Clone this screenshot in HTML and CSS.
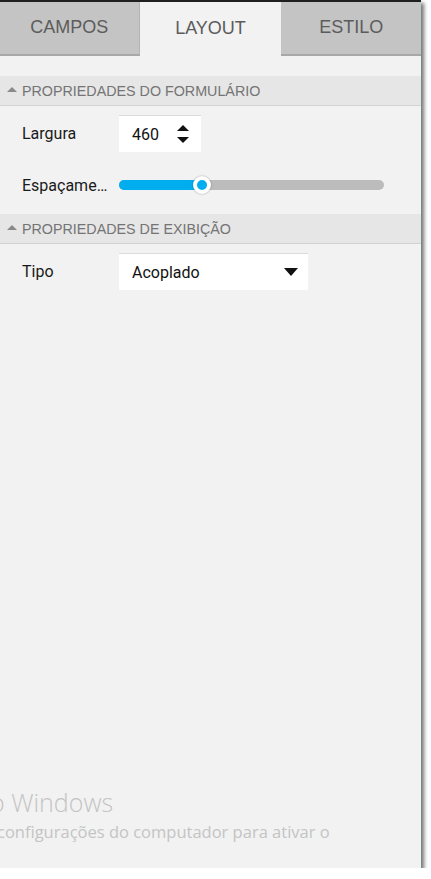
FILE: index.html
```html
<!DOCTYPE html>
<html lang="pt">
<head>
  <meta charset="UTF-8">
  <meta name="viewport" content="width=device-width, initial-scale=1.0">
  <title>Layout</title>
  <link rel="stylesheet" href="styles.css">
</head>
<body>
  <div class="panel">
    <div class="tabs">
      <div class="tab">CAMPOS</div>
      <div class="tab active">LAYOUT</div>
      <div class="tab">ESTILO</div>
    </div>

    <div class="section">
      <div class="section-head"><span class="caret"></span>PROPRIEDADES DO FORMULÁRIO</div>
      <div class="row">
        <label>Largura</label>
        <div class="number">
          <span>460</span>
          <span class="spin">
            <svg width="12" height="22" viewBox="0 0 12 22"><path d="M0 8L6 2L12 8Z" fill="#111"/><path d="M0 14L6 20L12 14Z" fill="#111"/></svg>
          </span>
        </div>
      </div>
      <div class="row slider-row">
        <label>Espaçame…</label>
        <div class="slider">
          <div class="fill"></div>
          <div class="thumb"></div>
        </div>
      </div>
    </div>

    <div class="section">
      <div class="section-head"><span class="caret"></span>PROPRIEDADES DE EXIBIÇÃO</div>
      <div class="row">
        <label>Tipo</label>
        <div class="select">
          <span>Acoplado</span>
          <svg width="14" height="8" viewBox="0 0 14 8"><path d="M0 0L14 0L7 8Z" fill="#111"/></svg>
        </div>
      </div>
    </div>

    <div class="watermark">
      <div class="wm-title">o Windows</div>
      <div class="wm-text">configurações do computador para ativar o</div>
    </div>
  </div>
</body>
</html>
```

FILE: styles.css
```css
body {
  margin: 0;
  padding: 0;
  background: #fff;
}

.panel {
  position: relative;
  width: 421px;
  height: 866px;
  background: #f2f2f2;
  border-top: 2px solid #1f1f1f;
  box-shadow: 3px 3px 4px rgba(0, 0, 0, 0.55);
  overflow: hidden;
  font-family: "Liberation Sans", Arial, sans-serif;
}

.tabs {
  display: flex;
  height: 54px;
}
.tab {
  width: 140px;
  display: flex;
  align-items: center;
  justify-content: center;
  background: #c4c4c4;
  border-bottom: 2px solid #a8a8a8;
  color: #5c5c5c;
  font-size: 18px;
  padding-bottom: 1px;
  box-sizing: border-box;
}
.tab.active {
  width: 142px;
  background: #f2f2f2;
  border-bottom: none;
}
.tab:first-child {
  border-right: 1px solid #b4b4b4;
}

.section {
  margin-top: 20px;
}
.section + .section {
  margin-top: 9px;
}
.section-head {
  display: flex;
  align-items: center;
  height: 29px;
  background: #e6e6e6;
  border-bottom: 1px solid #d2d2d2;
  color: #747474;
  font-size: 14.3px;
  padding-left: 7px;
}
.caret {
  width: 0;
  height: 0;
  border-left: 5px solid transparent;
  border-right: 5px solid transparent;
  border-bottom: 5px solid #8a8a8a;
  margin-right: 5px;
  margin-bottom: 2px;
}

.row {
  display: flex;
  align-items: center;
  padding-left: 22px;
  margin-top: 9px;
}
.row label {
  width: 97px;
  font-family: Roboto, "Liberation Sans", sans-serif;
  font-size: 16px;
  color: #1a1a1a;
}

.number {
  display: flex;
  align-items: center;
  justify-content: space-between;
  width: 82px;
  height: 37px;
  box-sizing: border-box;
  background: #fff;
  border-top: 1px solid #dcdcdc;
  padding: 0 12px 0 13px;
  font-family: Roboto, "Liberation Sans", sans-serif;
  font-size: 16px;
  color: #111;
}
.spin svg {
  display: block;
}

.slider-row {
  margin-top: 13px;
  height: 40px;
  align-items: center;
}
.slider {
  position: relative;
  width: 265px;
  height: 10px;
  border-radius: 5px;
  background: #bcbcbc;
}
.slider .fill {
  width: 84px;
  height: 100%;
  border-radius: 5px 0 0 5px;
  background: #00adef;
}
.slider .thumb {
  position: absolute;
  left: 74px;
  top: -4px;
  width: 10px;
  height: 10px;
  border-radius: 50%;
  background: #00adef;
  border: 4px solid #fff;
  box-shadow: 0 0 2px rgba(0, 0, 0, 0.35);
}

.select {
  display: flex;
  align-items: center;
  justify-content: space-between;
  width: 189px;
  height: 37px;
  box-sizing: border-box;
  background: #fff;
  border-top: 1px solid #dcdcdc;
  padding: 0 10px 0 13px;
  font-family: Roboto, "Liberation Sans", sans-serif;
  font-size: 16px;
  color: #111;
}
.select svg {
  display: block;
}

.watermark {
  position: absolute;
  left: -10px;
  top: 782px;
  color: #c4c4c4;
  font-family: "Open Sans", "Noto Sans", sans-serif;
  white-space: nowrap;
}
.wm-title {
  font-size: 25px;
  font-weight: 300;
  line-height: 36px;
}
.wm-text {
  padding-left: 7px;
  font-size: 16.5px;
  line-height: 24px;
}
```
